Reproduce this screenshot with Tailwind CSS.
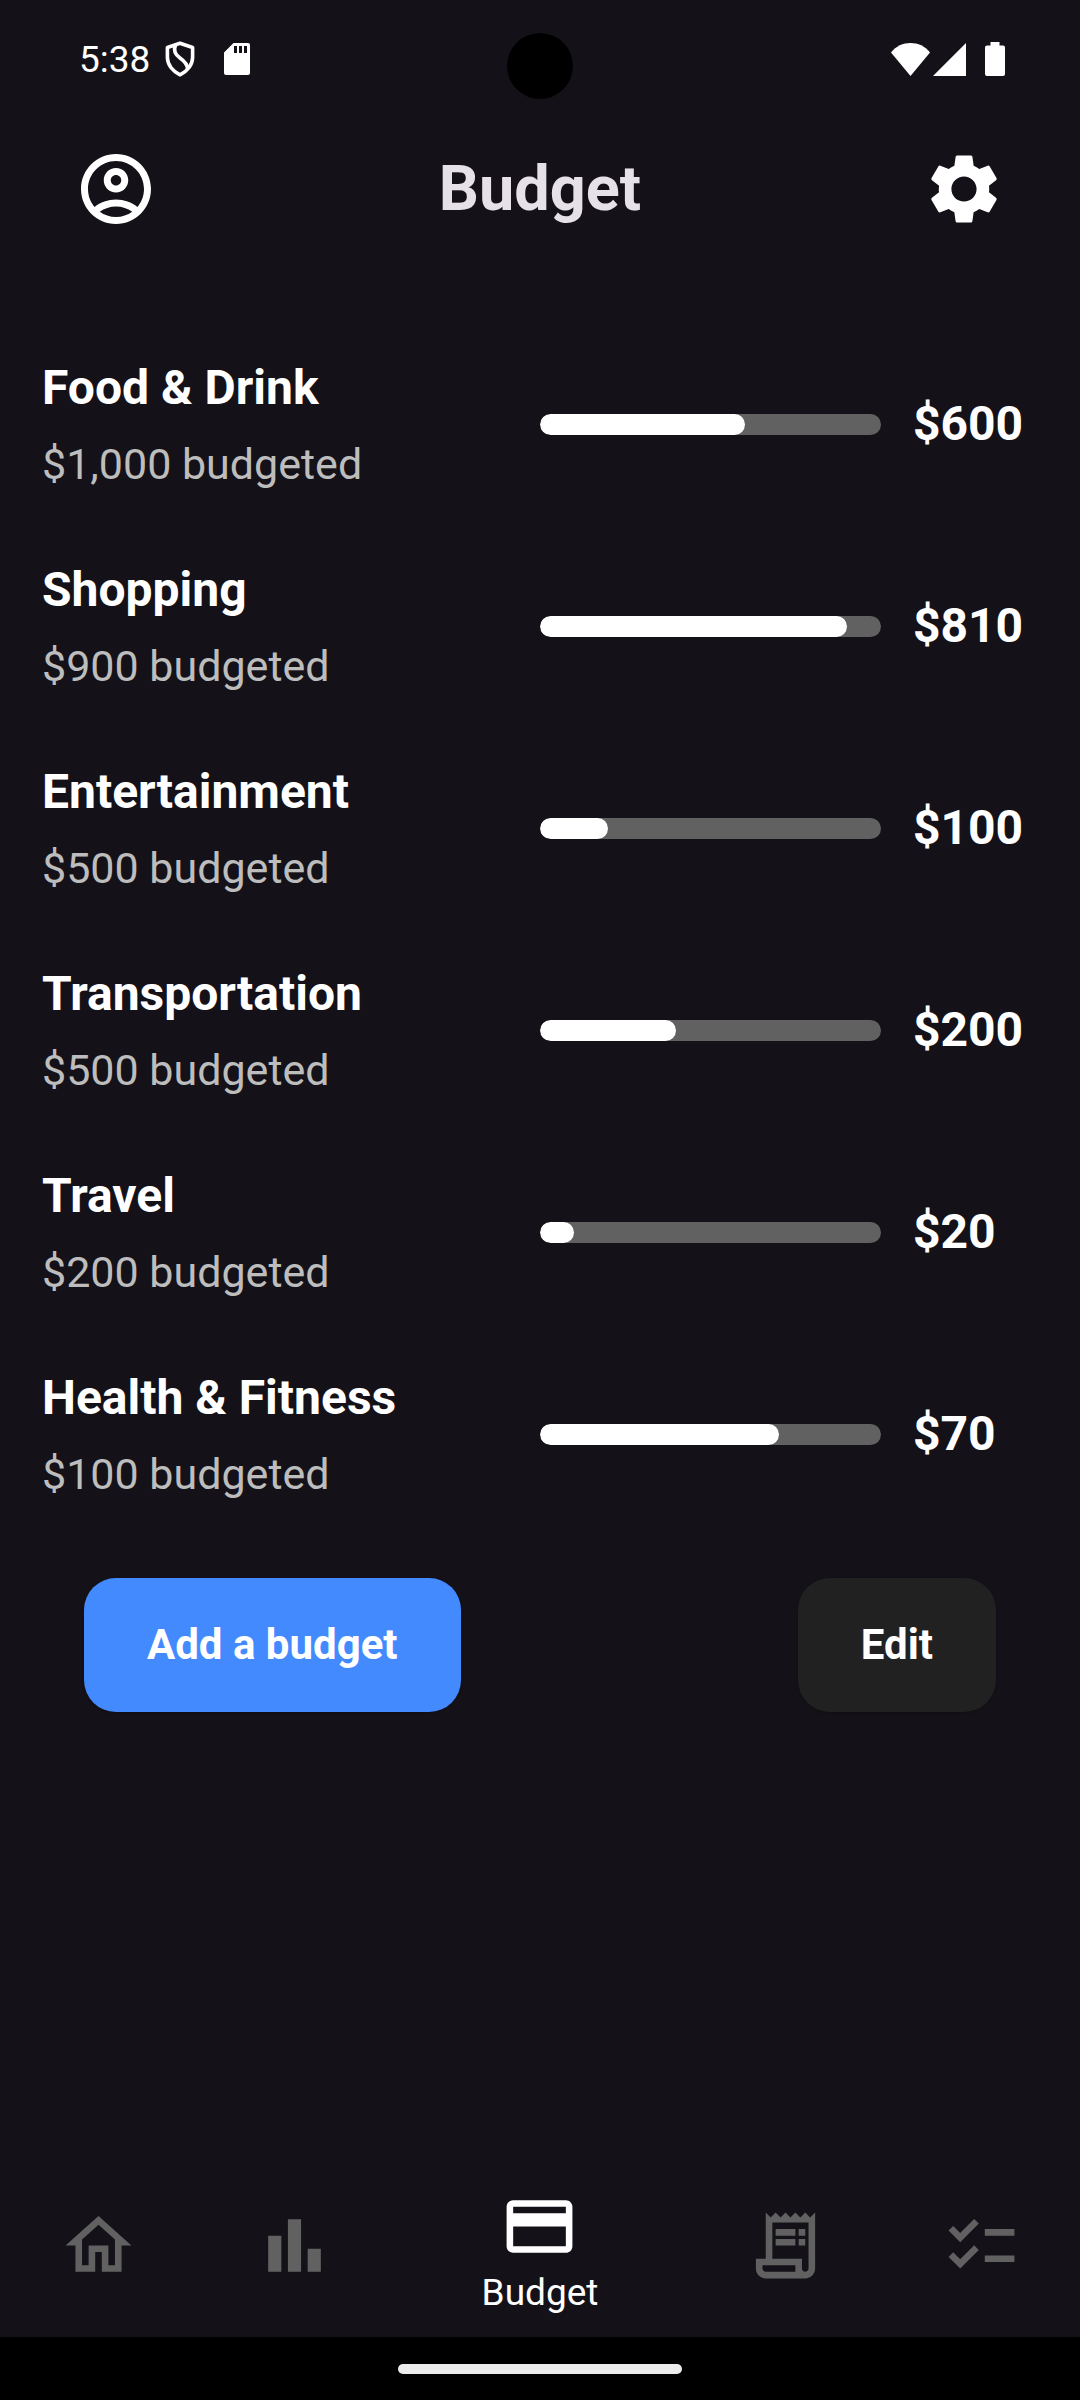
<!DOCTYPE html>
<html lang="en">
<head>
<meta charset="utf-8">
<meta name="viewport" content="width=device-width, initial-scale=1">
<title>Budget</title>
<script src="https://cdn.jsdelivr.net/npm/@tailwindcss/browser@4"></script>
</head>
<body class="flex min-h-screen flex-col bg-[#141218] font-['Roboto',sans-serif] text-white">

<!-- Status bar -->
<div class="relative flex h-[118px] items-center justify-between pl-[79px] pr-[75px]">
  <div class="flex items-center">
    <span class="text-[37px] leading-none">5:38</span>
    <svg class="ml-[15px] h-9 w-[30px]" viewBox="0 0 30 36" fill="none" stroke="#fff" stroke-width="3.6" stroke-linejoin="round" aria-hidden="true">
      <path d="M15 2.200 27.600 6.500V16.500C27.600 24 22 30.500 15 33.800 8 30.500 2.400 24 2.400 16.500V6.500Z"/>
      <path d="M10.500 4C8.500 9 10 13.500 15 17S22.500 23.500 22.500 28"/>
    </svg>
    <svg class="ml-[29px] h-8 w-[26px]" viewBox="0 0 26 32" aria-hidden="true">
      <path fill="#fff" fill-rule="evenodd" d="M9.500 0H24a2 2 0 0 1 2 2v28a2 2 0 0 1-2 2H2a2 2 0 0 1-2-2V9.500ZM10 3v7h3V3Zm5 0v7h3V3Zm5 0v7h3V3Z"/>
    </svg>
  </div>
  <div class="absolute left-1/2 top-[33px] size-[66px] -translate-x-1/2 rounded-full bg-black"></div>
  <div class="flex items-center">
    <svg class="h-[33px] w-[39px]" viewBox="0 0 39 33" fill="#fff" aria-hidden="true"><path d="M0 9.500C5 3 12 0 19.500 0S34 3 39 9.500L19.500 33Z"/></svg>
    <svg class="ml-[3px] h-[33px] w-[33px]" viewBox="0 0 33 33" fill="#fff" aria-hidden="true"><path d="M33 0v33H0Z"/></svg>
    <svg class="ml-[19px] h-[34px] w-5" viewBox="0 0 20 34" fill="#fff" aria-hidden="true"><path d="M5.500 0h9v3.500H18a2 2 0 0 1 2 2V32a2 2 0 0 1-2 2H2a2 2 0 0 1-2-2V5.500a2 2 0 0 1 2-2h3.500Z"/></svg>
  </div>
</div>

<header class="flex h-[142px] items-center justify-between px-[74px]">
  <button type="button" aria-label="Account" class="size-[84px]">
    <svg class="size-full" viewBox="0 0 24 24" fill="currentColor"><path d="M12 2C6.480 2 2 6.480 2 12s4.480 10 10 10 10-4.480 10-10S17.520 2 12 2zM7.350 18.500C8.660 17.560 10.260 17 12 17s3.340.56 4.650 1.500C15.340 19.440 13.740 20 12 20s-3.340-.56-4.650-1.500zm10.790-1.380C16.450 15.800 14.320 15 12 15s-4.450.8-6.140 2.120C4.700 15.730 4 13.950 4 12c0-4.420 3.580-8 8-8s8 3.580 8 8c0 1.950-.7 3.730-1.860 5.120z"/><path d="M12 6c-1.930 0-3.500 1.570-3.500 3.500S10.070 13 12 13s3.500-1.570 3.500-3.500S13.930 6 12 6zm0 5c-.83 0-1.500-.67-1.500-1.500S11.170 8 12 8s1.500.67 1.500 1.500S12.830 11 12 11z"/></svg>
  </button>
  <h1 class="pb-0.5 text-[63px] font-bold leading-none text-[#e6e0e9]">Budget</h1>
  <button type="button" aria-label="Settings" class="size-[84px]">
    <svg class="size-full" viewBox="0 0 24 24" fill="currentColor"><path d="M19.140 12.940c.04-.3.060-.61.060-.94 0-.32-.02-.64-.07-.94l2.030-1.580c.18-.14.230-.41.120-.61l-1.920-3.320c-.12-.22-.37-.29-.59-.22l-2.390.96c-.5-.38-1.030-.7-1.620-.94L14.400 2.810c-.04-.24-.24-.41-.48-.41h-3.840c-.24 0-.43.170-.47.410L9.250 5.350c-.59.240-1.130.57-1.620.94L5.240 5.330c-.22-.08-.47 0-.59.220L2.740 8.870c-.12.210-.08.470.120.610l2.030 1.580c-.05.3-.09.630-.09.940s.02.640.070.940l-2.030 1.580c-.18.140-.23.410-.12.610l1.920 3.320c.12.220.370.290.590.220l2.390-.96c.5.380 1.030.7 1.620.94l.36 2.540c.05.240.240.410.480.410h3.840c.24 0 .44-.17.470-.41l.36-2.540c.59-.24 1.130-.56 1.620-.94l2.390.96c.22.080.470 0 .59-.22l1.920-3.320c.12-.22.070-.47-.12-.61l-2.010-1.580zM12 15.600c-1.980 0-3.600-1.620-3.600-3.600s1.620-3.600 3.600-3.600 3.600 1.620 3.600 3.600-1.620 3.600-3.600 3.600z"/></svg>
  </button>
</header>

<main class="pt-[63px]">
  <ul id="budgets"></ul>
  <div class="mt-[43px] flex justify-between px-[84px]">
    <button type="button" class="h-[134px] rounded-[32px] bg-[#448aff] px-[63px] pb-0.5 text-[42px] font-bold shadow-sm">Add a budget</button>
    <button type="button" class="h-[134px] rounded-[32px] bg-[#212121] px-[63px] pb-0.5 text-[42px] font-bold shadow-sm">Edit</button>
  </div>
</main>

<nav aria-label="Main" class="mt-auto flex h-[150px] text-[#616161]">
  <a href="#home" aria-label="Home" class="flex flex-2 justify-center pt-[19px]">
    <svg class="size-[79px]" viewBox="0 0 24 24" fill="currentColor"><path d="M12 3L2 12h3v8h6v-6h2v6h6v-8h3L12 3zm5 15h-2v-6H9v6H7v-7.810l5-4.500 5 4.500V18z"/></svg>
  </a>
  <a href="#stats" aria-label="Statistics" class="flex flex-2 justify-center pt-[19px]">
    <svg class="size-[79px]" viewBox="0 0 24 24" fill="currentColor"><path d="M4 9h4v11H4zM16 13h4v7h-4zM10 4h4v16h-4z"/></svg>
  </a>
  <a href="#budget" aria-current="page" class="flex flex-3 flex-col items-center text-white">
    <svg class="size-[79px] shrink-0" viewBox="0 0 24 24" fill="currentColor" aria-hidden="true"><path d="M20 4H4c-1.110 0-1.990.89-1.990 2L2 18c0 1.110.89 2 2 2h16c1.110 0 2-.89 2-2V6c0-1.110-.89-2-2-2zm0 14H4v-6h16v6zm0-10H4V6h16v2z"/></svg>
    <span class="text-[37px] leading-[54px]">Budget</span>
  </a>
  <a href="#receipts" aria-label="Receipts" class="flex flex-2 justify-center pt-[19px]">
    <svg class="size-[79px]" viewBox="0 0 24 24" fill="currentColor"><path d="M19.500 3.500L18 2l-1.500 1.500L15 2l-1.500 1.500L12 2l-1.500 1.500L9 2 7.500 3.500 6 2v14H3v3c0 1.660 1.340 3 3 3h12c1.660 0 3-1.340 3-3V2l-1.500 1.500zM15 20H6c-.55 0-1-.45-1-1v-1h10v2zm4-1c0 .55-.45 1-1 1s-1-.45-1-1v-3H8V5h11v14z"/><path d="M9 7h6v2H9zM16 7h2v2h-2zM9 10h6v2H9zM16 10h2v2h-2z"/></svg>
  </a>
  <a href="#checklist" aria-label="Checklist" class="flex flex-2 justify-center pt-[19px]">
    <svg class="size-[79px]" viewBox="0 0 24 24" fill="currentColor"><path d="M22 7h-9v2h9V7zm0 8h-9v2h9v-2zM5.540 11L2 7.460l1.410-1.410 2.120 2.120 4.240-4.240 1.410 1.410L5.540 11zm0 8L2 15.460l1.410-1.410 2.120 2.120 4.240-4.240 1.410 1.410L5.540 19z"/></svg>
  </a>
</nav>

<!-- System gesture bar -->
<div class="flex h-[63px] items-center justify-center bg-black">
  <div class="h-[10px] w-[284px] rounded-full bg-[#ececec]"></div>
</div>

<script>
const budgets = [
  { name: 'Food & Drink', limit: 1000, spent: 600 },
  { name: 'Shopping', limit: 900, spent: 810 },
  { name: 'Entertainment', limit: 500, spent: 100 },
  { name: 'Transportation', limit: 500, spent: 200 },
  { name: 'Travel', limit: 200, spent: 20 },
  { name: 'Health & Fitness', limit: 100, spent: 70 },
];
document.getElementById('budgets').innerHTML = budgets.map(b => `
  <li class="grid h-[202px] grid-cols-2 items-center">
    <div class="pl-[42px] pt-1">
      <h2 class="text-[48px] font-bold leading-[76px]">${b.name.replace('&', '&amp;')}</h2>
      <p class="text-[43px] leading-[76px] text-[#bdbdbd]">$${b.limit.toLocaleString('en-US')} budgeted</p>
    </div>
    <div class="flex items-center">
      <div class="h-[21px] flex-1 overflow-hidden rounded-full bg-[#616161]" role="progressbar" aria-label="Spent" aria-valuemin="0" aria-valuemax="${b.limit}" aria-valuenow="${b.spent}">
        <div class="h-full rounded-full bg-white" style="width:${b.spent / b.limit * 100}%"></div>
      </div>
      <span class="w-[199px] pl-8 text-[48px] font-bold leading-none">$${b.spent}</span>
    </div>
  </li>`).join('');
</script>
</body>
</html>
